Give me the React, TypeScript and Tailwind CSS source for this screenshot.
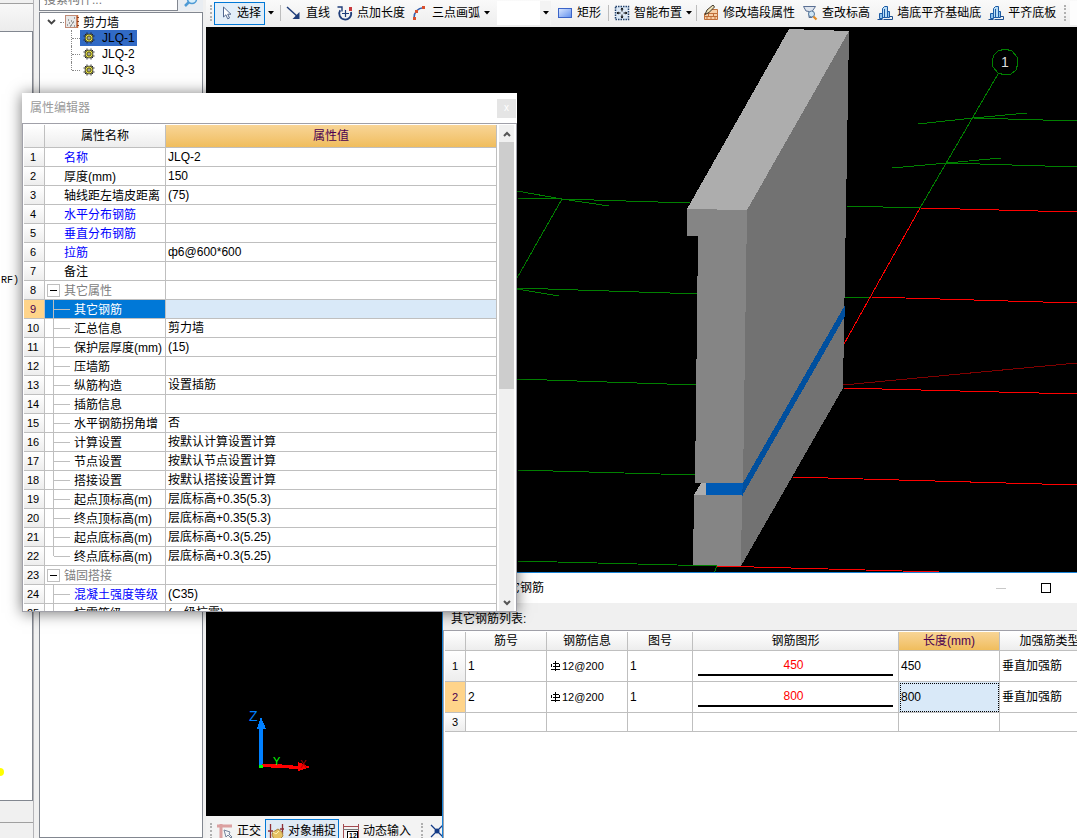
import type { ReactNode } from "react";

const properties: any[] = [
  { name: "名称", value: "JLQ-2", key: true },
  { name: "厚度(mm)", value: "150" },
  { name: "轴线距左墙皮距离", value: "(75)" },
  { name: "水平分布钢筋", value: "", key: true },
  { name: "垂直分布钢筋", value: "", key: true },
  { name: "拉筋", value: "ф6@600*600", key: true },
  { name: "备注", value: "" },
  { name: "其它属性", value: "", group: true },
  { name: "其它钢筋", value: "", child: true, selected: true },
  { name: "汇总信息", value: "剪力墙", child: true },
  { name: "保护层厚度(mm)", value: "(15)", child: true },
  { name: "压墙筋", value: "", child: true },
  { name: "纵筋构造", value: "设置插筋", child: true },
  { name: "插筋信息", value: "", child: true },
  { name: "水平钢筋拐角增", value: "否", child: true },
  { name: "计算设置", value: "按默认计算设置计算", child: true },
  { name: "节点设置", value: "按默认节点设置计算", child: true },
  { name: "搭接设置", value: "按默认搭接设置计算", child: true },
  { name: "起点顶标高(m)", value: "层底标高+0.35(5.3)", child: true },
  { name: "终点顶标高(m)", value: "层底标高+0.35(5.3)", child: true },
  { name: "起点底标高(m)", value: "层底标高+0.3(5.25)", child: true },
  { name: "终点底标高(m)", value: "层底标高+0.3(5.25)", child: true, last: true },
  { name: "锚固搭接", value: "", group: true },
  { name: "混凝土强度等级", value: "(C35)", child: true, key: true },
  { name: "抗震等级", value: "(一级抗震)", child: true },
];

const rebars = [
  { no: "1", length: "450", selected: false },
  { no: "2", length: "800", selected: true },
];

/* ---------- icons ---------- */

const Icon = ({ children }: { children: ReactNode }) => (
  <svg width="16" height="16" viewBox="0 0 16 16" className="shrink-0" fill="none">
    {children}
  </svg>
);

const CursorIcon = () => (
  <Icon>
    <path d="M4.5 2v10l2.4-2.2 1.8 4 1.8-.8-1.8-3.8h3.2z" fill="#fff" stroke="#52688f" />
  </Icon>
);

const LineIcon = () => (
  <Icon>
    <path d="M1 2l11 10" stroke="#1f3d7a" strokeWidth="1.5" />
    <path d="M13.5 7v7H6.5z" fill="#1f3d7a" />
  </Icon>
);

const PointLengthIcon = () => (
  <Icon>
    <path d="M3.200 5.200A6 6 0 1 0 14 7" stroke="#1f3d7a" strokeWidth="1.800" />
    <path d="M.5 2h4.500v4.500" stroke="#1f3d7a" strokeWidth="1.400" />
    <path d="M8.500 5v7M5 8.500h7" stroke="#1f3d7a" strokeWidth="1.200" />
    <path d="M12 2h3v4h-3z" fill="#c8383c" />
  </Icon>
);

const ArcIcon = () => (
  <Icon>
    <path d="M2 13C2 8 5 3.5 12 2.500" stroke="#345fae" strokeWidth="1.400" />
    <path d="M1 12h3v3H1zM3 5h3v3H3zM10 1h3v3h-3z" fill="#d9502f" />
  </Icon>
);

const RectIcon = () => (
  <Icon>
    <defs>
      <linearGradient id="rectFill" x1="0" y1="0" x2="1" y2="1">
        <stop stopColor="#dce8ff" />
        <stop offset="1" stopColor="#5f8fee" />
      </linearGradient>
    </defs>
    <rect x="1.5" y="3.5" width="13" height="9" fill="url(#rectFill)" stroke="#3b64c8" />
  </Icon>
);

const SmartIcon = () => (
  <Icon>
    <rect x="1.5" y="1.5" width="13" height="13" fill="#dbe8f5" stroke="#25456f" strokeWidth="1.500" strokeDasharray="1.5 1" />
    <path d="M8 3v3.500M8 9.500V13M3 8h3.500M9.500 8H13" stroke="#000" />
    <path d="M6.500 4.500h3L8 2.500zM6.500 11.500h3L8 13.500zM4.500 6.500v3L2.500 8zM11.500 6.500v3L13.500 8z" fill="#000" />
  </Icon>
);

const BrickEditIcon = () => (
  <Icon>
    <path d="M1.500 8.500h13v6h-13zM6 4.500h8.500v4H6z" fill="#f7cfa6" stroke="#c0703a" />
    <path d="M1.500 11.500h13M5.500 8.500v3M10.500 8.500v3M8 11.500v3M4 11.500v3M12 11.500v3" stroke="#c0703a" />
    <path d="M2 9.500l2-4.500 6-5 1.500 2L6 7.500z" fill="#efe2b8" stroke="#3c3325" />
  </Icon>
);

const FilterIcon = () => (
  <Icon>
    <path d="M1.500 1.500h12l-3.500 5v6H7v-6L4 6z" fill="#dfe5ee" stroke="#5a6f93" />
    <circle cx="9.500" cy="9" r="3" fill="#cfe6f5" stroke="#56779a" />
    <path d="M11.500 11.500l3 3" stroke="#e08a26" strokeWidth="2.200" />
  </Icon>
);

const AlignBottomIcon = () => (
  <Icon>
    <path d="M5.500 3.500l2-2h3v11h-5z" fill="#b8dcf6" stroke="#1c5ba5" />
    <path d="M7.500 4v9" stroke="#1c5ba5" />
    <path d="M2.500 8.500h3v5h-3zM10.500 6.500h2v6h-2z" fill="#8fc3ee" stroke="#1c5ba5" />
    <path d="M.5 14.500h5M12 11.500h3.500v3H6.500" stroke="#1c4f90" />
  </Icon>
);

const OrthoIcon = () => (
  <Icon>
    <path d="M0 3h15M4 1v15" stroke="#dba0a0" strokeWidth="3" />
    <path d="M7 7l2 7 2-2 3 3 1-1-3-3 1-2z" fill="#f4f6f9" stroke="#75839b" />
  </Icon>
);

const SnapIcon = () => (
  <Icon>
    <path d="M2.500 1v14M14.500 1v10M0 8h5M12 6h4" stroke="#8e2f36" strokeWidth="1.300" />
    <path d="M5 9l5-3 4 3 1 4-3 3H6l-2-4z" fill="#e6c163" stroke="#a98642" />
    <path d="M5 9l3 2 3-3" stroke="#fff2b7" />
  </Icon>
);

const DynInputIcon = () => (
  <Icon>
    <path d="M.5 1v14M15.500 1v14M0 3.500h16" stroke="#a34b50" />
    <path d="M0 6.500h16" stroke="#777" />
    <rect x="4.500" y="8.500" width="10" height="7" fill="#fff" stroke="#000" />
    <text x="6" y="15" fontSize="7" fontWeight="bold" fill="#000">12</text>
  </Icon>
);

const CrossIcon = () => (
  <Icon>
    <path d="M2 2l12 12M14 2L2 14" stroke="#123a86" strokeWidth="1.300" />
    <circle cx="8" cy="8" r="2.500" fill="#123a86" />
  </Icon>
);

const WallFolderIcon = () => (
  <Icon>
    <rect x="1.500" y="1.500" width="11" height="12" fill="#e7e7e7" stroke="#c08b77" />
    <path d="M3 11h1M5 9h1M7 11h1M9 8h1M4 6h1M10 12h1M7 7h1M10 4h1M6 12h1M8 9h1" stroke="#555" />
    <path d="M13.500 1v13" stroke="#d0703c" strokeWidth="1.500" />
    <path d="M13 3.500h2M13 7.500h2M13 11.500h2" stroke="#8b3d1e" />
  </Icon>
);

const GearIcon = () => (
  <svg width="12" height="12" viewBox="0 0 12 12" className="shrink-0" fill="none">
    <path d="M4 .5v11M8 .5v11M.5 4h11M.5 8h11M2 2l8 8M10 2l-8 8" stroke="#222" />
    <circle cx="6" cy="6" r="4" fill="#f5ee3c" stroke="#333" strokeWidth="0.800" />
    <path d="M6 2.500v7M2.500 6h7M3.500 3.500l5 5M8.500 3.500l-5 5" stroke="#333" strokeWidth="0.700" />
    <circle cx="6" cy="6" r="1.300" fill="#fff" stroke="#222" strokeWidth="0.700" />
  </svg>
);

const Caret = () => (
  <svg width="6" height="4" viewBox="0 0 6 4" className="shrink-0">
    <path d="M0 0h6L3 3.500z" fill="#000" />
  </svg>
);

const Chevron = ({ up }: { up?: boolean }) => (
  <svg width="8" height="6" viewBox="0 0 8 6" fill="none">
    <path d={up ? "M1 5l3-3 3 3" : "M1 1l3 3 3-3"} stroke="#555" strokeWidth="2" />
  </svg>
);

// HRB rebar grade mark: circle with stem and base bar
const RebarMark = () => (
  <svg width="9" height="10" viewBox="0 0 9 10" fill="none" shapeRendering="crispEdges" className="shrink-0">
    <path d="M4.500 0v10M1.500 2.500h6M1.500 5.500h6M.5 3v3M8.500 3v3M0 8.500h9" stroke="#000" />
  </svg>
);

/* ---------- toolbar ---------- */

const Grip = () => <span className="h-4 w-0 shrink-0 border-l-2 border-dotted border-[#b0b0b0]" />;

const Separator = () => <span className="block h-4 w-px shrink-0 bg-[#bdbdbd]" />;

const Tool = ({ icon, label }: { icon: ReactNode; label: string }) => (
  <button className="flex shrink-0 items-center gap-1 pl-[3px] pr-1 whitespace-nowrap">
    {icon}
    {label}
  </button>
);

function Toolbar() {
  return (
    <div className="flex h-[27px] shrink-0 items-center overflow-hidden bg-gradient-to-b from-[#fafafa] to-[#ededed] pb-px pl-1">
      <Grip />
      <button className="ml-0.5 flex h-[23px] shrink-0 items-center gap-0.5 border border-[#0078d7] bg-[#e3eef8] pr-[3px] pl-1">
        <CursorIcon />
        选择
      </button>
      <button aria-label="选择方式" className="px-[3px]">
        <Caret />
      </button>
      <span className="ml-[3px] shrink-0">
        <Separator />
      </span>
      <div className="ml-0.5 flex shrink-0 items-center">
        <Tool icon={<LineIcon />} label="直线" />
        <Tool icon={<PointLengthIcon />} label="点加长度" />
        <Tool icon={<ArcIcon />} label="三点画弧" />
        <button aria-label="画弧方式" className="pr-1">
          <Caret />
        </button>
      </div>
      <div className="relative ml-[3px] h-6 w-[54px] shrink-0 bg-white">
        <select aria-label="弧参数" className="h-full w-full appearance-none bg-white">
          <option></option>
        </select>
        <span className="pointer-events-none absolute inset-y-0 right-0 flex w-[11px] items-center justify-center bg-[#f3f3f3]">
          <Caret />
        </span>
      </div>
      <div className="ml-[3px] flex shrink-0 items-center">
        <Tool icon={<RectIcon />} label="矩形" />
      </div>
      <span className="ml-[3px] shrink-0">
        <Separator />
      </span>
      <div className="ml-0.5 flex shrink-0 items-center">
        <Tool icon={<SmartIcon />} label="智能布置" />
        <Caret />
      </div>
      <span className="ml-1 shrink-0">
        <Separator />
      </span>
      <div className="ml-[3px] flex shrink-0 items-center">
        <Tool icon={<BrickEditIcon />} label="修改墙段属性" />
        <Tool icon={<FilterIcon />} label="查改标高" />
        <Tool icon={<AlignBottomIcon />} label="墙底平齐基础底" />
        <Tool icon={<AlignBottomIcon />} label="平齐底板" />
      </div>
      <span className="ml-1 flex">
        <Grip />
      </span>
      <span className="ml-1 h-6 flex-1 bg-[#fdfdfd]" />
    </div>
  );
}

function StatusBar() {
  return (
    <div className="flex h-[22px] shrink-0 items-start overflow-hidden bg-[#f3f3f3] pt-[3px] pl-1">
      <div className="flex h-6 shrink-0 items-center">
        <Grip />
        <button className="flex items-center gap-1 pr-1 pl-[5px]">
          <OrthoIcon />
          正交
        </button>
        <button className="flex h-6 items-center gap-1 border border-[#0078d7] bg-[#dfeaf5] pr-0.5 pl-0.5">
          <SnapIcon />
          对象捕捉
        </button>
        <button className="flex items-center gap-1 pr-2.5 pl-1">
          <DynInputIcon />
          动态输入
        </button>
        <Grip />
        <button aria-label="交点" className="pl-1.5">
          <CrossIcon />
        </button>
      </div>
    </div>
  );
}

/* ---------- left panels ---------- */

function ComponentTree() {
  return (
    <aside className="flex w-[164px] shrink-0 flex-col">
      <div className="flex h-[11px] shrink-0 flex-col justify-end overflow-hidden">
        <div className="flex h-[22px] shrink-0">
          <input
            aria-label="搜索构件"
            placeholder="搜索构件..."
            className="w-[139px] border border-[#828790] bg-white px-1 text-xs outline-none placeholder:text-[#777]"
          />
          <button aria-label="搜索" className="flex flex-1 items-center justify-center bg-[#e9edf2]">
            <svg width="14" height="14" viewBox="0 0 14 14" fill="none">
              <circle cx="8" cy="6" r="4.500" fill="#d8effc" stroke="#4f9bd5" strokeWidth="1.500" />
              <path d="M5 9l-4 4" stroke="#4f9bd5" strokeWidth="2.500" />
            </svg>
          </button>
        </div>
      </div>
      <div className="mt-px flex-1 border border-[#828790] bg-white pt-px">
        <div className="flex h-4 items-center pl-[7px]">
          <svg width="9" height="6" viewBox="0 0 9 6" fill="none">
            <path d="M1 1l3.500 3.500L8 1" stroke="#444" strokeWidth="1.800" />
          </svg>
          <span className="ml-1 w-1 border-t border-dotted border-[#888]" />
          <WallFolderIcon />
          <span className="ml-[3px] pt-0.5">剪力墙</span>
        </div>
        <ul className="ml-[31px]">
          {["JLQ-1", "JLQ-2", "JLQ-3"].map((name, i) => (
            <li key={name} className="flex h-4 items-center">
              <span className={`self-start border-l border-dotted border-[#888] ${i === 2 ? "h-2" : "h-4"}`} />
              <span className="w-2 border-t border-dotted border-[#888]" />
              <span className={`flex h-4 w-[57px] items-center gap-[7px] pl-[3px] ${i === 0 ? "bg-[#316ac5]" : ""}`}>
                <GearIcon />
                {name}
              </span>
            </li>
          ))}
        </ul>
      </div>
    </aside>
  );
}

function LeftStrip() {
  return (
    <aside className="flex w-[34px] shrink-0 flex-col overflow-hidden border-r border-[#b4b4b8]">
      <div className="h-1 border-b border-[#a0a0a0]" />
      <div className="h-[27px] bg-gradient-to-b from-[#f8f8f8] to-[#ececec]" />
      <div className="flex flex-1 flex-col border-y border-r border-[#828790] bg-white">
        <span className="mt-[241px] pl-px font-['Liberation_Mono','Noto_Sans_CJK_SC',monospace] text-[10px] leading-4">RF)</span>
        <span className="mt-auto mb-6 h-2 w-1 rounded-r-full bg-[#ffff00]" />
      </div>
      <div className="h-[22px] border-b border-[#a0a0a0]" />
      <div className="h-[15px]" />
    </aside>
  );
}

/* ---------- 3D view ---------- */

function Scene() {
  return (
    <svg
      viewBox="206 27 871 789"
      preserveAspectRatio="xMinYMin slice"
      className="min-h-0 w-full flex-1 bg-black"
      fill="none"
      shapeRendering="crispEdges"
    >
      <g stroke="#008000">
        <path d="M517 191L562 199L609 206M517 198L562 199L690 203M562 199L517 278" />
        <path d="M517 288L700 294M517 289L559 296" />
        <path d="M517 379L697 385M517 470L696 475M517 561L717 566L714 573" />
        <path d="M918 124L973 118L1027 113M973 118L1077 121" />
        <path d="M892 168L947 163L1001 158M947 163L1077 167" />
        <path d="M846 206L920 208L998 74M845 297L871 298" />
        <path d="M1005 49L1012 51L1017 57L1018 63L1016 70L1011 74L1005 75L998 73L993 67L992 61L994 55L998 51Z" />
      </g>
      <path d="M844 344L920 208L1077 212M871 297L1077 303M843 388L1077 394M792 477L1077 485M717 566L939 572" stroke="#f00" />
      <path d="M843 385L1077 363" stroke="#800000" />

      {/* wall */}
      <path d="M789 29L849 31L747 210L687 209Z" fill="#adadad" />
      <path d="M747 210L849 31L843 388L741 566L740 495Z" fill="#727272" />
      <path d="M687 209L747 210L743 484L695 483L698 236L687 236Z" fill="#858585" />
      <path d="M701 483L707 483L707 495L694 495Z" fill="#adadad" />
      <path d="M706 483H743V496H706Z" fill="#005ab4" />
      <path d="M845 305L845 316L742 496L743 483Z" fill="#004f9e" />
      <path d="M694 495L742 495L741 566L693 565Z" fill="#858585" />
      <path d="M717 566L743 567" stroke="#f00" />
      <text x="1001" y="67" fill="#ddd" fontSize="14" className="font-['Liberation_Sans',sans-serif]">1</text>

      {/* axes */}
      <path d="M259 765V729H257L261 717L266 729H263V765Z" fill="#0080ff" />
      <path d="M262 764H277L298 766V762L310 767L298 771V769L262 767Z" fill="#f00" />
      <path d="M259 765h4v3h-4z" fill="#0f0" />
      <g fontSize="14" className="font-['Liberation_Sans',sans-serif]">
        <text x="249" y="721" fill="#0080ff">Z</text>
        <text x="273" y="765" fontSize="11" fill="#0f0">Y</text>
        <text x="300" y="768" fontSize="10" fill="#b00000">X</text>
      </g>
    </svg>
  );
}

/* ---------- property editor ---------- */

const headCell = "border-r border-b border-[#bfbfbf] bg-gradient-to-b from-white to-[#ededed] p-0 font-normal";
const activeHead = "border-r border-b border-[#bfbfbf] bg-gradient-to-b from-[#f8d596] to-[#f0bd5c] p-0 font-normal text-[#4b0050]";
const cell = "overflow-hidden border-r border-b border-[#bfbfbf] p-0 whitespace-nowrap";
const activeIndex = "border-r border-b border-[#bfbfbf] bg-[#ffd48a] p-0 font-normal text-[#4b0050]";

function NameCell({ row }: any) {
  const color = row.selected ? "text-white" : row.group ? "text-[#808080]" : row.key ? "text-[#0000ff]" : "";
  return (
    <div className={`flex h-[18px] items-center ${color}`}>
      {row.group && (
        <button
          aria-label="折叠"
          className="ml-0.5 flex h-[13px] w-[13px] shrink-0 items-center justify-center border border-[#bfbfbf] bg-white"
        >
          <span className="h-px w-[7px] bg-black" />
        </button>
      )}
      {row.child && (
        <>
          <span className={`ml-2 w-px shrink-0 self-start bg-[#bfbfbf] ${row.last ? "h-[9px]" : "h-[18px]"}`} />
          <span className="h-px w-4 shrink-0 bg-[#bfbfbf]" />
        </>
      )}
      <span className={`pt-0.5 ${row.group || row.child ? "ml-1" : "ml-[19px]"}`}>{row.name}</span>
    </div>
  );
}

function PropertyEditor() {
  return (
    <section className="absolute top-[93px] left-[22px] z-20 flex h-[519px] w-[495px] flex-col bg-white shadow-[0_1px_14px_rgba(0,0,0,0.55)]">
      <header className="flex h-[30px] shrink-0 items-center justify-between pl-2 text-[#9a9a9a]">
        属性编辑器
        <button aria-label="关闭" className="mr-px h-[19px] w-[19px] bg-[#e5e5e5] text-[10px] leading-none text-white">
          x
        </button>
      </header>
      <div className="flex min-h-0 flex-1 border border-[#a0a0a8] pt-px pl-px">
        <div className="min-h-0 flex-1 overflow-hidden">
          <table className="w-full table-fixed border-separate border-spacing-0 leading-[18px]">
            <colgroup>
              <col className="w-[21px]" />
              <col className="w-[121px]" />
              <col />
            </colgroup>
            <thead>
              <tr className="h-[23px]">
                <th className={headCell}></th>
                <th className={headCell}>属性名称</th>
                <th className={activeHead}>属性值</th>
              </tr>
            </thead>
            <tbody>
              {properties.map((row, i) => (
                <tr key={i} className="h-[19px]">
                  <th className={row.selected ? activeIndex : headCell}>
                    <span className="block h-[18px] pr-0.5 text-[11px]">{i + 1}</span>
                  </th>
                  <td className={`${cell} ${row.selected ? "bg-[#0078d7]" : ""}`}>
                    <NameCell row={row} />
                  </td>
                  <td className={`${cell} ${row.selected ? "bg-[#d9e9f8]" : ""}`}>
                    <div className="h-[18px] pl-0.5">{row.value}</div>
                  </td>
                </tr>
              ))}
            </tbody>
          </table>
        </div>
        <div className="mr-0.5 ml-0.5 flex w-[15px] shrink-0 flex-col bg-[#f0f0f0]">
          <button aria-label="向上滚动" className="flex h-[17px] shrink-0 items-center justify-center">
            <Chevron up />
          </button>
          <div className="h-[247px] bg-[#cdcdcd]" />
          <button aria-label="向下滚动" className="mt-auto flex h-[17px] shrink-0 items-center justify-center">
            <Chevron />
          </button>
        </div>
      </div>
    </section>
  );
}

/* ---------- other rebar dialog ---------- */

function RebarDialog() {
  return (
    <section className="absolute top-[572px] right-0 bottom-0 left-[442px] z-10 flex flex-col overflow-hidden border-t border-l border-[#1883d7] bg-white">
      <header className="flex h-[30px] shrink-0 items-center justify-between pr-[26px] pl-[53px]">
        其它钢筋
        <span className="flex items-center gap-[35px]">
          <button aria-label="最小化" className="h-px w-2.5 bg-[#c8c8c8]" />
          <button aria-label="最大化" className="h-2.5 w-2.5 border border-black" />
        </span>
      </header>
      <div className="h-[27px] shrink-0 bg-[#f0f0f0] pl-2 leading-8">其它钢筋列表:</div>
      <div className="flex-1 overflow-hidden border-t border-l border-[#a0a0a8] pt-px pl-px">
        <table className="w-[655px] table-fixed border-separate border-spacing-0 leading-[18px]">
          <colgroup>
            <col className="w-[21px]" />
            <col className="w-[81px]" />
            <col className="w-[81px]" />
            <col className="w-[65px]" />
            <col className="w-[206px]" />
            <col className="w-[101px]" />
            <col className="w-[100px]" />
          </colgroup>
          <thead>
            <tr className="h-[19px]">
              <th className={headCell}></th>
              <th className={headCell}>筋号</th>
              <th className={headCell}>钢筋信息</th>
              <th className={headCell}>图号</th>
              <th className={headCell}>钢筋图形</th>
              <th className={activeHead}>长度(mm)</th>
              <th className={headCell}>加强筋类型</th>
            </tr>
          </thead>
          <tbody>
            {rebars.map((r) => (
              <tr key={r.no} className="h-[31px]">
                <th className={`text-[11px] ${r.selected ? activeIndex : headCell}`}>{r.no}</th>
                <td className={`${cell} pl-0.5`}>{r.no}</td>
                <td className={cell}>
                  <span className="flex items-center gap-0.5 pl-1 text-[11px]">
                    <RebarMark />
                    12@200
                  </span>
                </td>
                <td className={`${cell} pl-0.5`}>1</td>
                <td className={cell}>
                  <div className="mx-[5px] flex h-5 flex-col items-center justify-end border-b-2 border-black pr-1 text-[#ff0000]">
                    {r.length}
                  </div>
                </td>
                <td className={`${cell} ${r.selected ? "bg-[#d9e9f8] outline-1 -outline-offset-2 outline-dotted outline-black" : ""}`}>
                  <span className="pl-0.5">{r.length}</span>
                </td>
                <td className={`${cell} pl-0.5`}>垂直加强筋</td>
              </tr>
            ))}
            <tr className="h-[19px]">
              <th className={`text-[11px] ${headCell}`}>3</th>
              <td className={cell}></td>
              <td className={cell}></td>
              <td className={cell}></td>
              <td className={cell}></td>
              <td className={cell}></td>
              <td className={cell}></td>
            </tr>
          </tbody>
        </table>
      </div>
    </section>
  );
}

export default function App() {
  return (
    <div className="relative flex h-screen w-full overflow-hidden bg-[#f0f0f0] font-['Liberation_Sans','Noto_Sans_CJK_SC',sans-serif] text-xs text-black">
      <LeftStrip />
      <div className="w-[5px] shrink-0" />
      <ComponentTree />
      <main className="ml-[3px] flex min-w-0 flex-1 flex-col">
        <Toolbar />
        <Scene />
        <StatusBar />
      </main>
      <RebarDialog />
      <PropertyEditor />
    </div>
  );
}
